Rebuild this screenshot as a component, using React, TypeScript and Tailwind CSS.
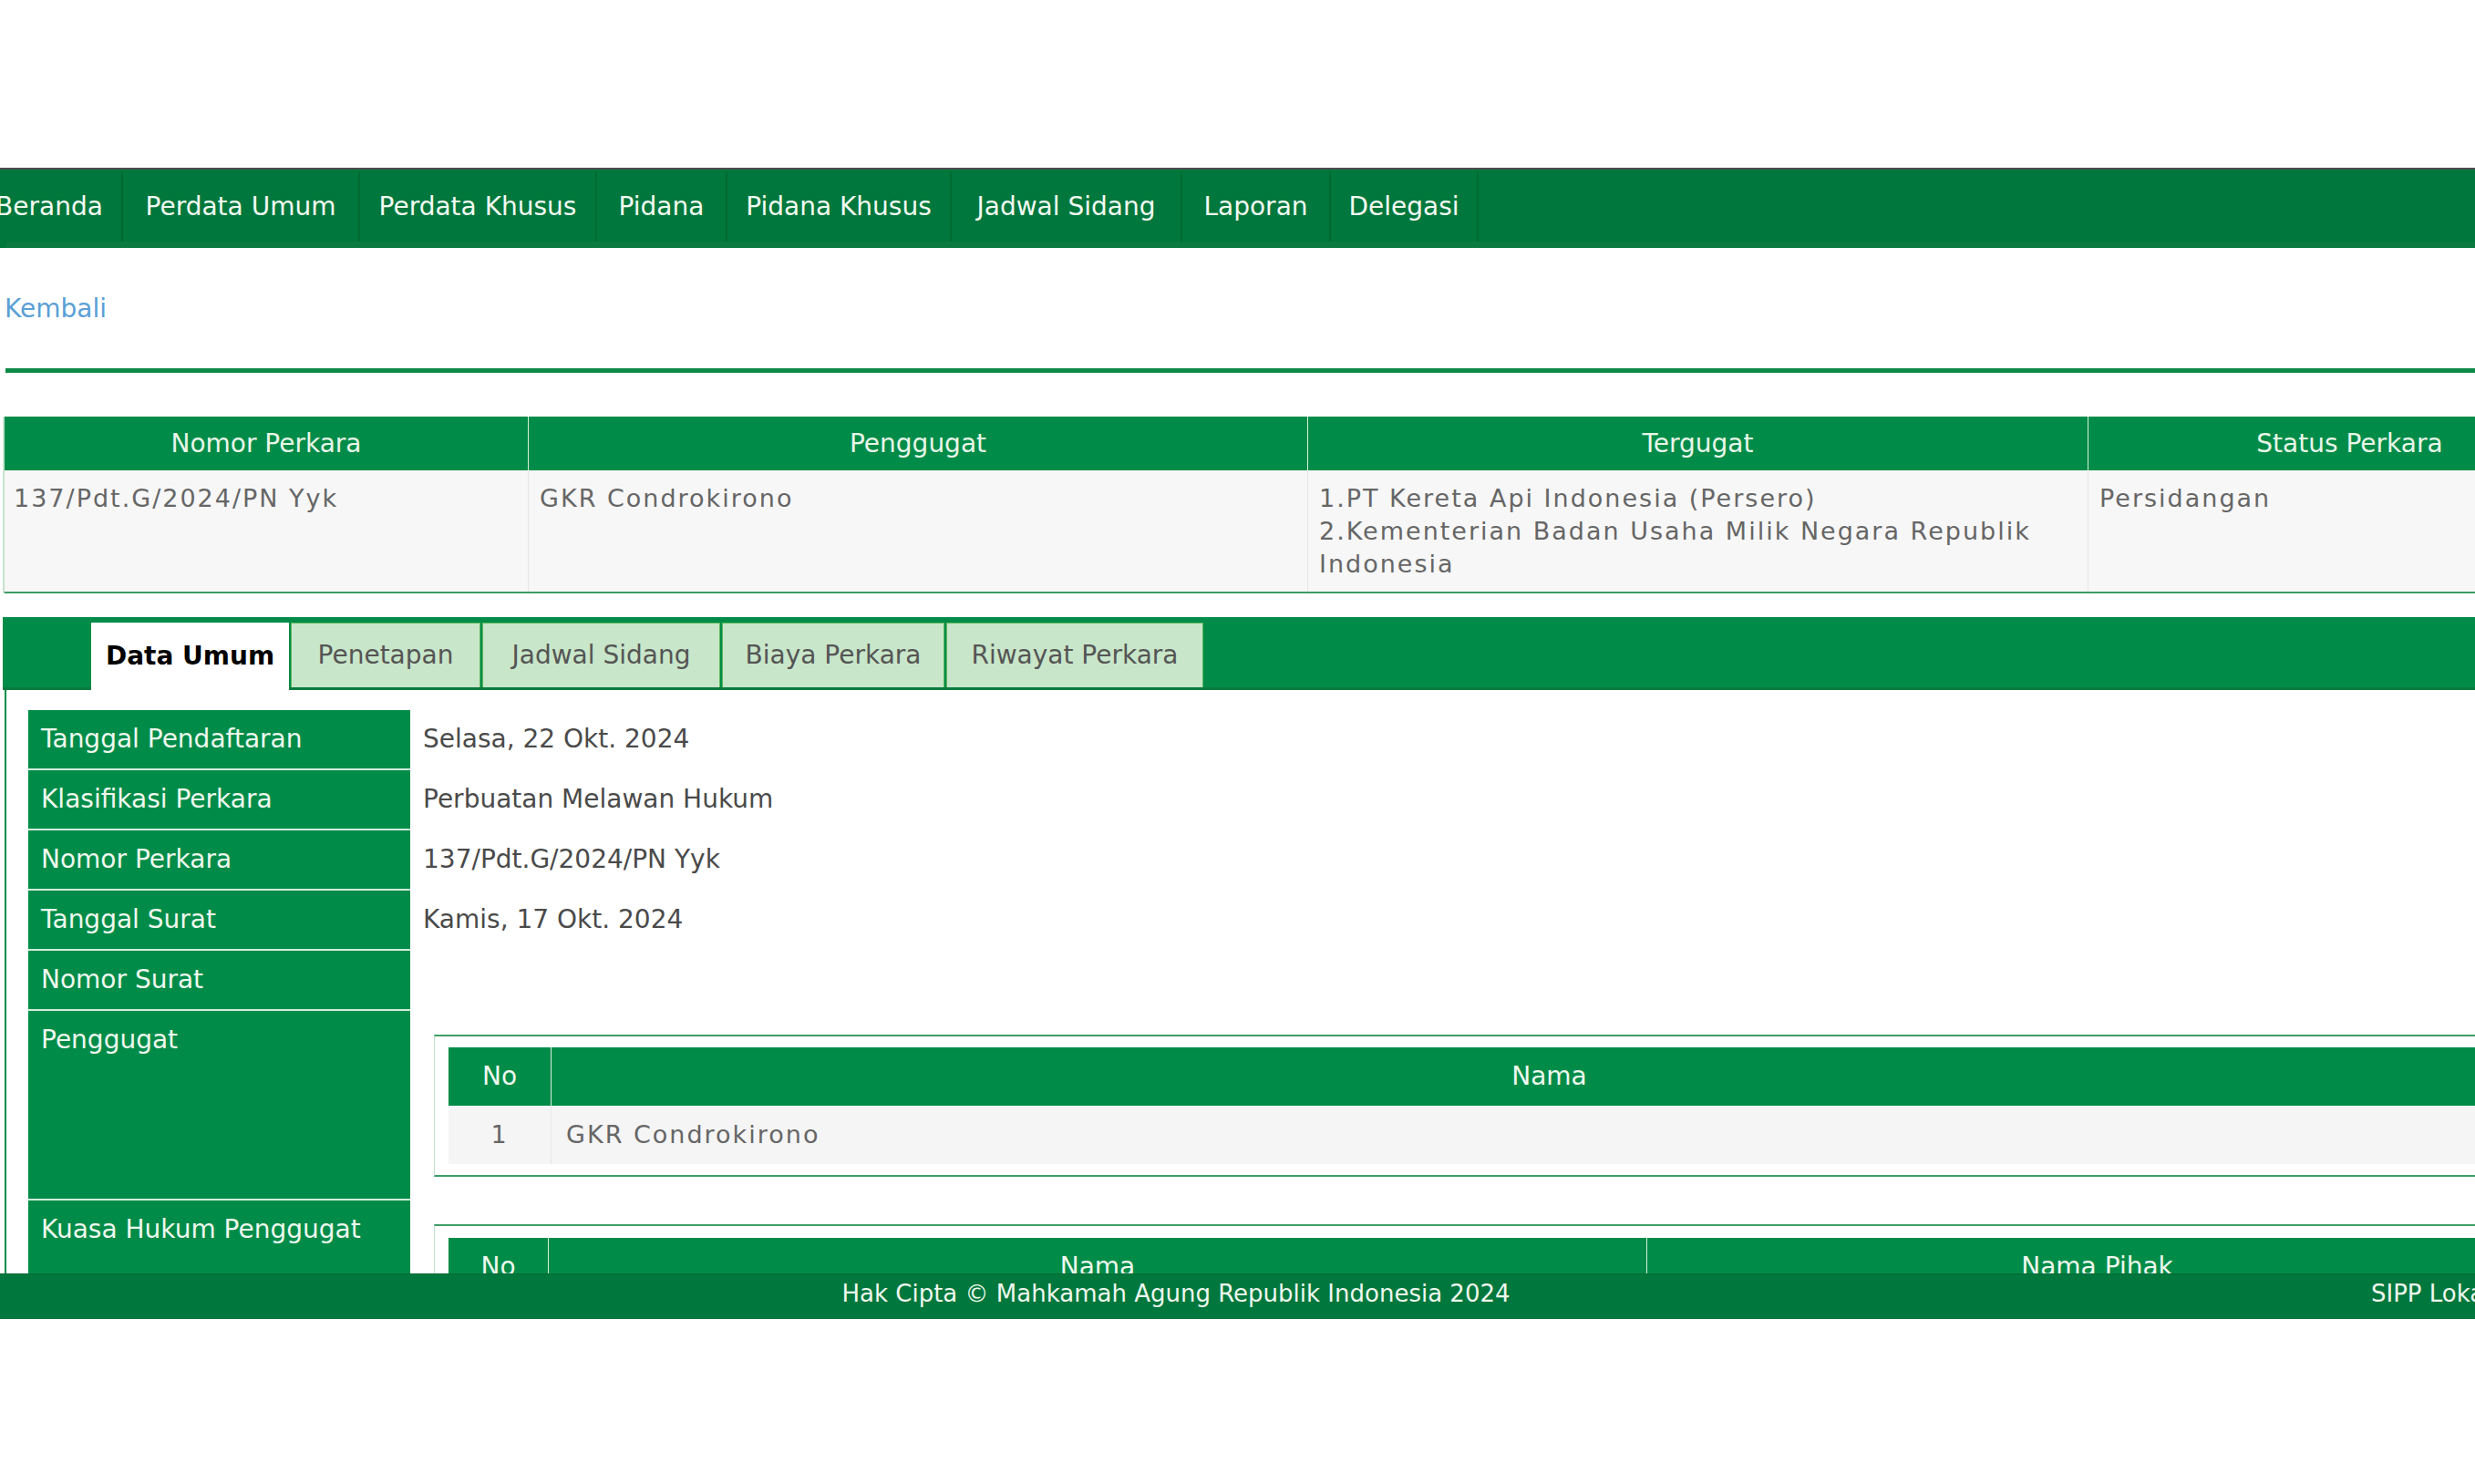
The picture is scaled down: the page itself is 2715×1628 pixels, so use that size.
import React from 'react';

const navItems = [
  { label: 'Beranda', w: 'w-[160px]' },
  { label: 'Perdata Umum', w: 'w-[260px]' },
  { label: 'Perdata Khusus', w: 'w-[260px]' },
  { label: 'Pidana', w: 'w-[143px]' },
  { label: 'Pidana Khusus', w: 'w-[246px]' },
  { label: 'Jadwal Sidang', w: 'w-[253px]' },
  { label: 'Laporan', w: 'w-[163px]' },
  { label: 'Delegasi', w: 'w-[162px]' },
];

const tabs = [
  { label: 'Penetapan', w: 'w-[208px]' },
  { label: 'Jadwal Sidang', w: 'w-[261px]' },
  { label: 'Biaya Perkara', w: 'w-[244px]' },
  { label: 'Riwayat Perkara', w: 'w-[282px]' },
];

const details = [
  { label: 'Tanggal Pendaftaran', value: 'Selasa, 22 Okt. 2024' },
  { label: 'Klasifikasi Perkara', value: 'Perbuatan Melawan Hukum' },
  { label: 'Nomor Perkara', value: '137/Pdt.G/2024/PN Yyk' },
  { label: 'Tanggal Surat', value: 'Kamis, 17 Okt. 2024' },
  { label: 'Nomor Surat', value: '' },
];

function Label({ children }: { children: React.ReactNode }) {
  return (
    <div className="bg-[#008c48] px-[14px] py-[15px] border-b-2 border-[#d4ecdc] text-[28px] leading-[34px] text-[#eef8ee] whitespace-nowrap">
      {children}
    </div>
  );
}

function HeadCell({ children, className = '' }: { children?: React.ReactNode; className?: string }) {
  return (
    <div className={`h-[64px] flex items-center justify-center text-[28px] text-[#eef8ee] ${className}`}>
      {children}
    </div>
  );
}

export default function App() {
  return (
    <div className="w-full min-h-screen bg-white overflow-hidden font-['DejaVu_Sans',sans-serif]">
      <div className="h-[184px]" />

      {/* top menu */}
      <nav className="h-[88px] bg-[#00773c] border-t-2 border-[#4d4d4d] flex flex-col">
        <ul className="flex h-[79px] ml-[-25px] pt-[3px]">
          {navItems.map(item => (
            <li
              key={item.label}
              className={`${item.w} shrink-0 flex items-center justify-center border-r-2 border-[#006a31] text-[28px] text-[#f2fbf2] whitespace-nowrap`}
            >
              {item.label}
            </li>
          ))}
        </ul>
        <div className="h-[7px] ml-[7px] bg-[#0a7a3f]" />
      </nav>

      <main className="h-[1125px] overflow-hidden">
        <div className="pt-[50px] pl-[5px] text-[28px] leading-[34px] text-[#5b9fd6]">Kembali</div>
        <div className="mt-[48px] ml-[6px] h-[5px] bg-[#0d8a48]" />

        {/* ringkasan perkara */}
        <div className="mt-[48px] ml-[3px] w-[2859px] border-l-2 border-[#c6e3cf]">
          <div className="grid grid-cols-[574px_855px_856px_574px] h-[59px] bg-[#008c48] text-[28px] text-[#e8f6e8]">
            <div className="flex items-center justify-center">Nomor Perkara</div>
            <div className="flex items-center justify-center border-l border-[#d9f0e0]">Penggugat</div>
            <div className="flex items-center justify-center border-l border-[#d9f0e0]">Tergugat</div>
            <div className="flex items-center justify-center border-l border-[#d9f0e0]">Status Perkara</div>
          </div>
          <div className="grid grid-cols-[574px_855px_856px_574px] bg-[#f7f7f7] border-b-2 border-[#3c9a63] text-[27px] leading-[36px] tracking-[2px] text-[#666666]">
            <div className="pt-[13px] pb-[12px] px-[10px]">137/Pdt.G/2024/PN Yyk</div>
            <div className="pt-[13px] pb-[12px] px-[12px] border-l border-[#e6e6e6]">GKR Condrokirono</div>
            <div className="pt-[13px] pb-[12px] px-[12px] border-l border-[#e6e6e6] whitespace-nowrap">
              1.PT Kereta Api Indonesia (Persero)
              <br />
              2.Kementerian Badan Usaha Milik Negara Republik
              <br />
              Indonesia
            </div>
            <div className="pt-[13px] pb-[12px] px-[12px] border-l border-[#e6e6e6]">Persidangan</div>
          </div>
        </div>

        {/* tabs */}
        <div className="mt-[26px] ml-[3px] h-[80px] bg-[#008c48] border-b-[3px] border-[#0a7b3e] flex items-end pl-[97px] gap-[2px]">
          <div className="w-[217px] h-[74px] mb-[-3px] bg-white flex items-center justify-center text-[28px] font-bold text-black">
            Data Umum
          </div>
          {tabs.map(tab => (
            <div
              key={tab.label}
              className={`${tab.w} h-[71px] bg-[#c8e6c9] border border-b-0 border-[#5cb85c] flex items-center justify-center text-[28px] text-[#555555] whitespace-nowrap`}
            >
              {tab.label}
            </div>
          ))}
        </div>

        {/* data umum */}
        <div className="ml-[5px] border-l-2 border-[#008c48] pl-[24px] pt-[22px]">
          <div className="grid grid-cols-[419px_1fr]">
            {details.map(row => (
              <React.Fragment key={row.label}>
                <Label>{row.label}</Label>
                <div className="py-[15px] pl-[14px] text-[28px] leading-[34px] text-[#4a4a4a]">{row.value}</div>
              </React.Fragment>
            ))}

            <Label>Penggugat</Label>
            <div className="py-[26px] pl-[26px]">
              <div className="w-[2400px] border-y-2 border-l border-[#3f9d66] border-l-[#bfe0cb] px-[15px] py-[12px]">
                <div className="w-[2302px]">
                  <div className="grid grid-cols-[112px_2190px] bg-[#008c48]">
                    <HeadCell>No</HeadCell>
                    <HeadCell className="border-l border-[#d9f0e0]">Nama</HeadCell>
                  </div>
                  <div className="grid grid-cols-[112px_2190px] h-[64px] bg-[#f5f5f5] text-[27px] tracking-[2px] text-[#666666]">
                    <div className="flex items-center justify-center">1</div>
                    <div className="flex items-center pl-[16px] border-l border-[#e8e8e8]">GKR Condrokirono</div>
                  </div>
                </div>
              </div>
            </div>

            <Label>Kuasa Hukum Penggugat</Label>
            <div className="pt-[26px] pl-[26px]">
              <div className="w-[2400px] border-t-2 border-l border-[#3f9d66] border-l-[#bfe0cb] px-[15px] pt-[13px]">
                <div className="grid grid-cols-[109px_1205px_988px] bg-[#008c48]">
                  <HeadCell>No</HeadCell>
                  <HeadCell className="border-l border-[#d9f0e0]">Nama</HeadCell>
                  <HeadCell className="border-l border-[#d9f0e0]">Nama Pihak</HeadCell>
                </div>
              </div>
            </div>
          </div>
        </div>
      </main>

      <footer className="h-[50px] bg-[#00773c] border-t border-[#066a34] flex items-center pb-[6px] text-[26px] text-[#eef8ee] whitespace-nowrap">
        <div className="w-[2580px] shrink-0 text-center">Hak Cipta © Mahkamah Agung Republik Indonesia 2024</div>
        <div className="shrink-0 pl-[21px]">SIPP Lokal Versi 5.5.0</div>
      </footer>
    </div>
  );
}
